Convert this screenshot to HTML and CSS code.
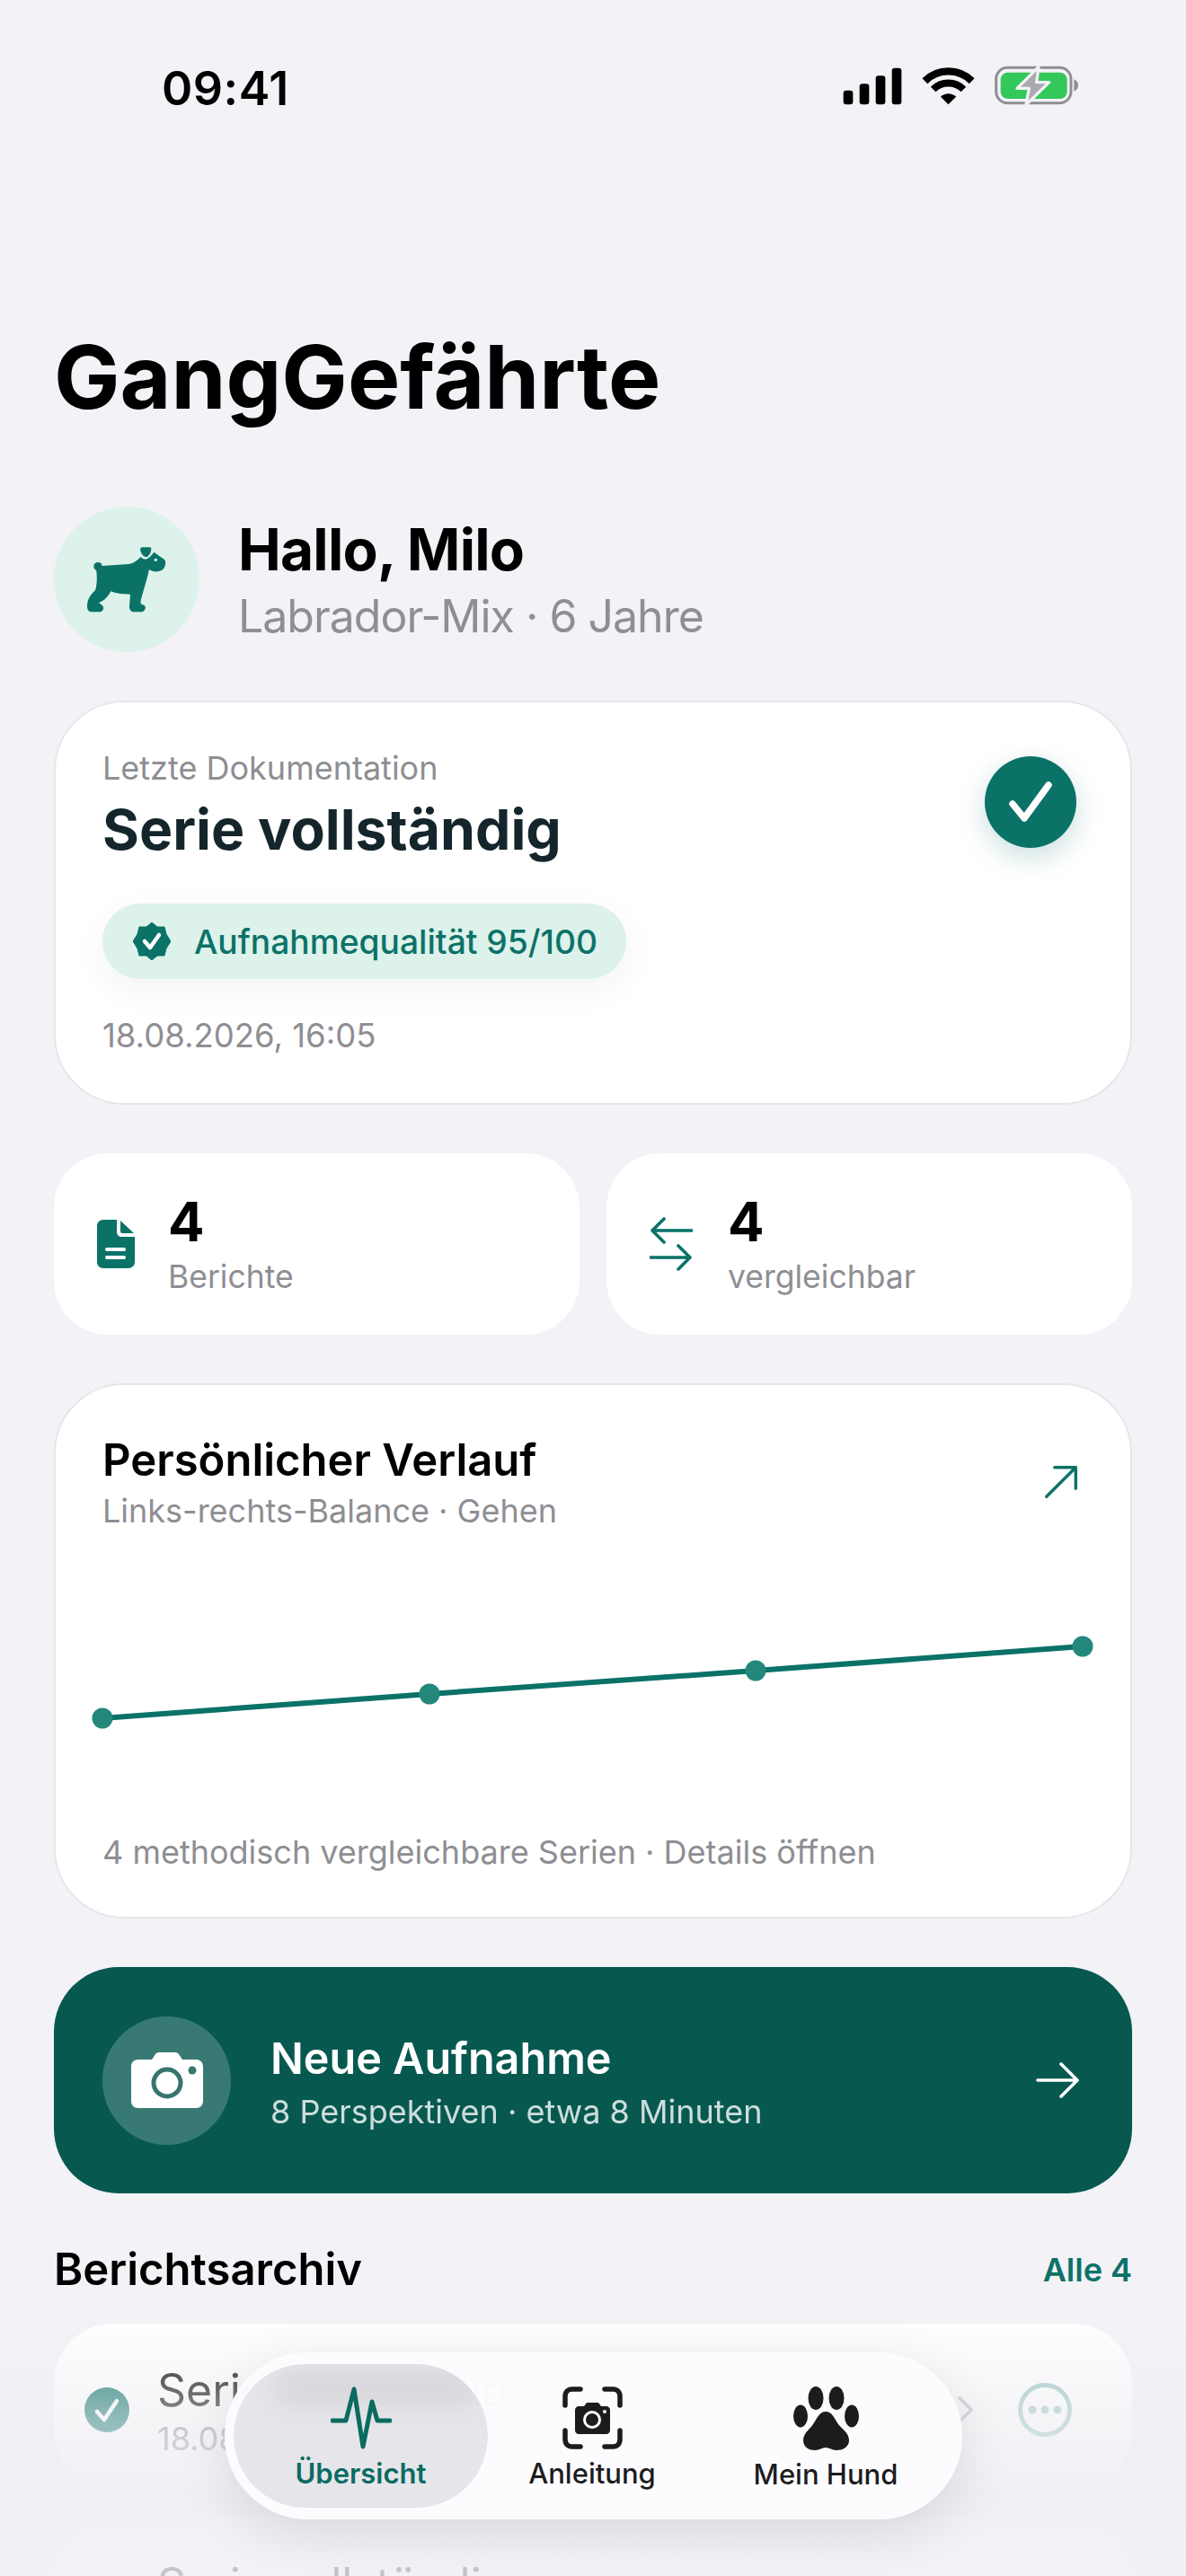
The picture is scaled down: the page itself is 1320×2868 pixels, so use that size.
FILE: index.html
```html
<!DOCTYPE html>
<html lang="de">
<head>
	<meta charset="UTF-8">
	<title>GangGefährte</title>
	<link rel="stylesheet" href="styles.css">
</head>
<body>
	<div class="status-bar">
		<span class="status-time">09:41</span>
		<div class="status-icons">
			<svg class="ic-signal" viewBox="170 76 198 126">
				<rect x="172" y="153" width="32" height="47" rx="9"/>
				<rect x="226" y="131" width="32" height="69" rx="9"/>
				<rect x="280" y="104" width="32" height="96" rx="9"/>
				<rect x="334" y="78" width="32" height="122" rx="9"/>
			</svg>
			<svg class="ic-wifi" viewBox="432 72 176 130">
				<path d="M441 121A112 112 0 0 1 599 121" fill="none" stroke="#000" stroke-width="25"/>
				<path d="M469 149A72 72 0 0 1 571 149" fill="none" stroke="#000" stroke-width="24"/>
				<path d="M520 200L494 174A37 37 0 0 1 546 174Z"/>
			</svg>
			<svg class="ic-battery" viewBox="675 72 282 135">
				<rect x="680" y="79" width="250" height="118" rx="38" fill="none" stroke="#8e8e93" stroke-width="9"/>
				<path d="M940 118C950 122 954 130 954 138C954 146 950 154 940 158Z" fill="#8e8e93"/>
				<rect x="695" y="95" width="222" height="88" rx="24" fill="#34c759"/>
				<path d="M822 76L750 148H790L780 203L857 128H815Z" fill="#a9a9ae" stroke="#f2f2f7" stroke-width="10" stroke-linejoin="round"/>
			</svg>
		</div>
	</div>

	<div class="page">
		<h1 class="app-title">GangGefährte</h1>

		<div class="dog-head">
			<div class="dog-avatar">
				<svg viewBox="60 72 486 486">
					<circle cx="207" cy="272" r="14" fill="#0b7268"/>
					<path d="M200 276L222 270L310 264C330 262 345 245 350 240C358 252 375 252 394 224L430 250C436 262 430 280 420 285C405 292 390 290 378 282C372 310 360 350 350 385V397L362 402C370 410 362 424 352 424H328C316 424 312 416 312 405L315 365C290 365 265 362 250 355C240 375 225 388 210 393L222 402C230 412 222 424 212 424H186C176 424 171 416 171 405C171 385 180 368 198 352C205 330 205 300 200 276Z" fill="#0b7268"/>
					<path d="M345 213C345 207 350 205 356 205H378C385 205 389 208 388 215C387 228 378 243 367 244C355 243 346 228 345 213Z" fill="#0b7268" stroke="#dcf2ea" stroke-width="6"/>
					<circle cx="400" cy="250" r="5" fill="#dcf2ea"/>
				</svg>
			</div>
			<div>
				<div class="dog-name">Hallo, Milo</div>
				<div class="dog-meta">Labrador-Mix · 6 Jahre</div>
			</div>
		</div>

		<section class="card last-doc">
			<div class="doc-label">Letzte Dokumentation</div>
			<div class="doc-title">Serie vollständig</div>
			<div class="quality-pill">
				<svg viewBox="0 0 42 42">
					<path d="M21 0L27 5L35 5L37 13L42 21L37 29L35 37L27 37L21 42L15 37L7 37L5 29L0 21L5 13L7 5L15 5Z" fill="#0b7268" stroke="#0b7268" stroke-width="1" stroke-linejoin="round"/>
					<path d="M13 21L19 28L29 14" fill="none" stroke="#fff" stroke-width="4.5" stroke-linecap="round" stroke-linejoin="round"/>
				</svg>
				<span>Aufnahmequalität 95/100</span>
			</div>
			<div class="doc-date">18.08.2026, 16:05</div>
			<div class="doc-check">
				<svg viewBox="0 0 102 102">
					<path d="M31 53L44 69L71 32" fill="none" stroke="#fff" stroke-width="7.5" stroke-linecap="round" stroke-linejoin="round"/>
				</svg>
			</div>
		</section>

		<div class="stats">
			<div class="stat">
				<svg class="stat-icon" viewBox="0 0 42 54">
					<path d="M7 0H22V13C22 17 24 19 28 19H42V47C42 51 39 54 35 54H7C3 54 0 51 0 47V7C0 3 3 0 7 0Z" fill="#0b7268"/>
					<path d="M26 1L41 15H28C27 15 26 14 26 13Z" fill="#0b7268"/>
					<rect x="9" y="31" width="23" height="4" rx="2" fill="#fff"/>
					<rect x="9" y="40" width="23" height="4" rx="2" fill="#fff"/>
				</svg>
				<div>
					<div class="stat-num">4</div>
					<div class="stat-label">Berichte</div>
				</div>
			</div>
			<div class="stat">
				<svg class="stat-icon swap" viewBox="0 0 48 60">
					<path d="M47 15H3M16 2L3 15L16 28M1 45H45M32 32L45 45L32 58" fill="none" stroke="#0b7268" stroke-width="3.6" stroke-linecap="round" stroke-linejoin="round"/>
				</svg>
				<div>
					<div class="stat-num">4</div>
					<div class="stat-label">vergleichbar</div>
				</div>
			</div>
		</div>

		<section class="card history">
			<div class="history-head">
				<div>
					<h2 class="history-title">Persönlicher Verlauf</h2>
					<div class="history-sub">Links-rechts-Balance · Gehen</div>
				</div>
				<svg class="history-open" viewBox="0 0 42 42">
					<path d="M3 39L39 3M13 3H39V29" fill="none" stroke="#0b7268" stroke-width="3.8" stroke-linecap="round" stroke-linejoin="round"/>
				</svg>
			</div>
			<svg class="history-chart" viewBox="0 0 1196 180">
				<polyline points="52,109 416,82 779,56 1143,29" fill="none" stroke="#0b7268" stroke-width="6" stroke-linecap="round"/>
				<circle class="chart-dot" cx="52" cy="109" r="11.5"/>
				<circle class="chart-dot" cx="416" cy="82" r="11.5"/>
				<circle class="chart-dot" cx="779" cy="56" r="11.5"/>
				<circle class="chart-dot" cx="1143" cy="29" r="11.5"/>
			</svg>
			<div class="history-foot">4 methodisch vergleichbare Serien · Details öffnen</div>
		</section>

		<div class="new-shot">
			<div class="new-shot-icon">
				<svg viewBox="0 0 80 62">
					<path d="M8 8H23L27 2C28 1 29 0 31 0H49C51 0 52 1 53 2L57 8H72C77 8 80 11 80 16V54C80 59 77 62 72 62H8C3 62 0 59 0 54V16C0 11 3 8 8 8Z" fill="#fff"/>
					<circle cx="40" cy="34" r="15" fill="none" stroke="#37756f" stroke-width="5"/>
					<circle cx="68" cy="20" r="4.5" fill="#37756f"/>
				</svg>
			</div>
			<div class="new-shot-text">
				<div class="new-shot-title">Neue Aufnahme</div>
				<div class="new-shot-sub">8 Perspektiven · etwa 8 Minuten</div>
			</div>
			<svg class="new-shot-arrow" viewBox="0 0 48 40">
				<path d="M2 20H45M28 2L46 20L28 38" fill="none" stroke="#fff" stroke-width="3.6" stroke-linecap="round" stroke-linejoin="round"/>
			</svg>
		</div>

		<div class="archive-head">
			<h2>Berichtsarchiv</h2>
			<span>Alle 4</span>
		</div>

		<div class="archive-row">
			<svg class="row-check" viewBox="0 0 50 50">
				<circle cx="25" cy="25" r="25" fill="#0b7268"/>
				<path d="M14 27L22 36L36 15" fill="none" stroke="#fff" stroke-width="4.5" stroke-linecap="round" stroke-linejoin="round"/>
			</svg>
			<div class="row-text">
				<div class="row-title">Serie vollständig</div>
				<div class="row-date">18.08.2026, 16:05</div>
			</div>
			<span class="row-score">95/100</span>
			<svg class="row-chevron" viewBox="0 0 18 30">
				<path d="M2 2L15 15L2 28" fill="none" stroke="#8e8e93" stroke-width="3.5" stroke-linecap="round" stroke-linejoin="round"/>
			</svg>
			<svg class="row-more" viewBox="0 0 60 60">
				<circle cx="30" cy="30" r="27.5" fill="none" stroke="#0b7268" stroke-width="5"/>
				<circle cx="16" cy="30" r="4.5" fill="#0b7268"/>
				<circle cx="30" cy="30" r="4.5" fill="#0b7268"/>
				<circle cx="44" cy="30" r="4.5" fill="#0b7268"/>
			</svg>
		</div>
		<div class="archive-row">
			<div class="row-text second">
				<div class="row-title">Serie vollständig</div>
			</div>
		</div>
	</div>

	<!-- Ausblendung hinter der Tableiste -->
	<div class="bottom-fade"></div>

	<nav class="tab-bar">
		<div class="tab active">
			<span class="tab-ghost" aria-hidden="true"></span>
			<svg class="tab-icon" viewBox="0 0 68 70" width="68" height="70">
				<path d="M2 38H17L26 3L36 67L46 17L52 38H66" fill="none" stroke="#0b6b62" stroke-width="5" stroke-linecap="round" stroke-linejoin="round"/>
			</svg>
			<span class="tab-label">Übersicht</span>
		</div>
		<div class="tab">
			<svg class="tab-icon" viewBox="0 0 67 70" width="67" height="70">
				<path d="M3 21V11C3 6 6 3 11 3H20M47 3H56C61 3 64 6 64 11V21M64 49V59C64 64 61 67 56 67H47M20 67H11C6 67 3 64 3 59V49" fill="none" stroke="#1c1c1e" stroke-width="5.5" stroke-linecap="round"/>
				<path d="M18 22H24L27 18H40L43 22H49C51 22 53 24 53 26V49C53 51 51 53 49 53H18C16 53 14 51 14 49V26C14 24 16 22 18 22Z" fill="#1c1c1e"/>
				<circle cx="33" cy="37" r="8.5" fill="none" stroke="#fff" stroke-width="3"/>
				<circle cx="47" cy="28" r="2" fill="#fff"/>
			</svg>
			<span class="tab-label">Anleitung</span>
		</div>
		<div class="tab">
			<svg class="tab-icon" viewBox="0 0 73 71" width="73" height="71">
				<ellipse cx="8" cy="33" rx="8" ry="12.5" fill="#1c1c1e"/>
				<ellipse cx="25" cy="13" rx="8.5" ry="13" fill="#1c1c1e"/>
				<ellipse cx="48" cy="13" rx="8.5" ry="13" fill="#1c1c1e"/>
				<ellipse cx="65" cy="33" rx="8" ry="12.5" fill="#1c1c1e"/>
				<path d="M36 28C43 28 46 36 50 42C55 48 62 52 62 60C62 68 54 71 48 71C43 71 40 68 36 68C32 68 29 71 24 71C18 71 11 68 11 60C11 52 18 48 22 42C26 36 29 28 36 28Z" fill="#1c1c1e"/>
			</svg>
			<span class="tab-label">Mein Hund</span>
		</div>
	</nav>
</body>
</html>
```

FILE: styles.css
```css
*{
	margin: 0;
	padding: 0;
	box-sizing: border-box;
}
html,body{
	height: 2868px;
	overflow: hidden;
}
body{
	position: relative;
	background: #f2f2f7;
	font-family: Inter, "Noto Sans", "Liberation Sans", sans-serif;
	color: #000;
}
svg{
	display: block;
	flex-shrink: 0;
}

/* status bar */
.status-bar{
	height: 196px;
	padding: 74px 119px 0 180px;
	display: flex;
	justify-content: space-between;
	align-items: flex-start;
}
.status-time{
	font-size: 52px;
	line-height: 50px;
	font-weight: 600;
	letter-spacing: 0.5px;
}
.status-icons{
	display: flex;
	align-items: flex-start;
}
.ic-signal{
	width: 66px;
	height: 42px;
	margin-top: 1px;
}
.ic-wifi{
	width: 59px;
	height: 43px;
	margin-left: 22px;
}
.ic-battery{
	width: 94px;
	height: 45px;
	margin-left: 22px;
	margin-top: -1px;
}

.page{
	padding: 0 60px;
}
.app-title{
	font-size: 98px;
	line-height: 110px;
	font-weight: 700;
	margin-top: 169px;
}

/* dog header */
.dog-head{
	display: flex;
	align-items: center;
	gap: 43px;
	margin-top: 89px;
}
.dog-avatar{
	width: 162px;
	height: 162px;
	border-radius: 50%;
	background: #dcf2ea;
}
.dog-name{
	font-size: 64px;
	line-height: 72px;
	font-weight: 700;
	letter-spacing: -0.8px;
}
.dog-meta{
	font-size: 50px;
	line-height: 58px;
	letter-spacing: -1px;
	margin-top: 9px;
	color: #8e8e93;
}

.card{
	background: #fff;
	border: 2px solid #e6e6ea;
	border-radius: 78px;
}

/* last documentation */
.last-doc{
	position: relative;
	margin-top: 54px;
	height: 450px;
	padding: 52px 52px 0;
}
.doc-label{
	font-size: 36px;
	line-height: 42px;
	color: #8e8e93;
}
.doc-title{
	font-size: 62.5px;
	line-height: 78px;
	font-weight: 700;
	color: #14262c;
	margin-top: 8px;
}
.quality-pill{
	display: inline-flex;
	align-items: center;
	gap: 26px;
	height: 84px;
	margin-top: 44px;
	padding: 0 32px 0 34px;
	border-radius: 42px;
	background: #dcf2ea;
	color: #0b7268;
	font-size: 37.2px;
	font-weight: 500;
	box-shadow: 0 12px 40px rgba(0,0,0,0.05);
}
.quality-pill svg{
	width: 42px;
	height: 42px;
}
.doc-date{
	font-size: 36.5px;
	line-height: 42px;
	color: #8e8e93;
	margin-top: 42px;
}
.doc-check{
	position: absolute;
	top: 60px;
	right: 60px;
	width: 102px;
	height: 102px;
	border-radius: 50%;
	background: #0b7268;
	box-shadow: 0 10px 30px rgba(11,114,104,0.22);
}

/* counters */
.stats{
	display: flex;
	gap: 30px;
	margin-top: 54px;
}
.stat{
	flex: 1;
	height: 202px;
	display: flex;
	align-items: center;
	background: #fff;
	border-radius: 60px;
	padding-left: 48px;
}
.stat-icon{
	width: 42px;
	height: 54px;
	margin-right: 37px;
}
.stat-icon.swap{
	width: 48px;
	height: 60px;
	margin-right: 39px;
}
.stat-num{
	font-size: 60px;
	line-height: 68px;
	font-weight: 700;
}
.stat-label{
	font-size: 35.5px;
	line-height: 44px;
	color: #8e8e93;
	margin-top: 6px;
}

/* history chart */
.history{
	margin-top: 54px;
	height: 596px;
	padding: 54px 0 0;
}
.history-head{
	display: flex;
	justify-content: space-between;
	padding: 0 58px 0 52px;
}
.history-title{
	font-size: 49px;
	line-height: 60px;
	font-weight: 600;
}
.history-sub{
	font-size: 36px;
	line-height: 44px;
	margin-top: 4px;
	color: #8e8e93;
}
.history-open{
	width: 38px;
	height: 38px;
	margin-top: 35px;
}
.history-chart{
	width: 1196px;
	height: 180px;
	margin-top: 100px;
}
.chart-dot{
	fill: #23877c;
}
.history-foot{
	font-size: 36px;
	line-height: 44px;
	color: #8e8e93;
	margin-top: 56px;
	padding-left: 52px;
}

/* new recording button */
.new-shot{
	display: flex;
	align-items: center;
	height: 252px;
	margin-top: 54px;
	padding: 0 59px 0 54px;
	background: #075950;
	border-radius: 72px;
	color: #fff;
}
.new-shot-icon{
	width: 143px;
	height: 143px;
	border-radius: 50%;
	background: rgba(255,255,255,0.2);
	display: flex;
	align-items: center;
	justify-content: center;
}
.new-shot-icon svg{
	width: 80px;
	height: 62px;
}
.new-shot-text{
	flex: 1;
	padding-left: 44px;
}
.new-shot-title{
	font-size: 48.5px;
	line-height: 60px;
	font-weight: 600;
	margin-top: 2px;
}
.new-shot-sub{
	font-size: 36px;
	line-height: 44px;
	margin-top: 7px;
	opacity: 0.8;
}
.new-shot-arrow{
	width: 48px;
	height: 40px;
}

/* archive */
.archive-head{
	display: flex;
	justify-content: space-between;
	align-items: center;
	margin-top: 55px;
}
.archive-head h2{
	font-size: 49px;
	line-height: 60px;
	font-weight: 600;
}
.archive-head span{
	font-size: 36px;
	font-weight: 600;
	color: #0b7268;
}
.archive-row{
	position: relative;
	display: flex;
	align-items: flex-start;
	height: 186px;
	margin-top: 30px;
	padding: 44px 67px 0 34px;
	background: #fff;
	border-radius: 66px;
}
.row-check{
	width: 50px;
	height: 50px;
	margin-top: 27px;
}
.row-text{
	flex: 1;
	padding-left: 31px;
}
.row-text.second{
	padding-left: 81px;
}
.row-title{
	font-size: 50px;
	line-height: 60px;
}
.row-date{
	font-size: 36px;
	line-height: 44px;
	margin-top: 2px;
	color: #8e8e93;
}
.row-score{
	position: absolute;
	left: 820px;
	top: 50px;
	font-size: 50px;
	color: #8e8e93;
}
.row-chevron{
	position: absolute;
	left: 1006px;
	top: 81px;
	width: 18px;
	height: 30px;
	opacity: 0.6;
}
.row-more{
	position: absolute;
	left: 1073px;
	top: 66px;
	width: 60px;
	height: 60px;
	opacity: 0.4;
}

.bottom-fade{
	position: absolute;
	left: 0;
	right: 0;
	bottom: 0;
	height: 300px;
	background: linear-gradient(to bottom, rgba(238,238,243,0) 0%, rgba(238,238,243,0.55) 38%, rgba(238,238,243,0.85) 68%, rgba(240,240,245,0.82) 100%);
}

/* tab bar */
.tab-bar{
	position: absolute;
	left: 250px;
	top: 2619px;
	width: 821px;
	height: 186px;
	padding: 13px 10px;
	border-radius: 93px;
	display: grid;
	grid-template-columns: 283px 232px 288px;
	background: rgba(252,252,255,0.98);
	box-shadow: 0 16px 60px rgba(0,0,0,0.1);
}
.tab{
	position: relative;
	overflow: hidden;
	display: flex;
	flex-direction: column;
	align-items: center;
	padding-top: 25px;
	border-radius: 80px;
}
.tab.active{
	background: #e6e6ea;
}
/* verwischte Reihe hinter dem aktiven Tab */
.tab-ghost{
	position: absolute;
	left: 44px;
	top: 6px;
	width: 230px;
	height: 42px;
	border-radius: 20px;
	background: #c9c9ce;
	filter: blur(12px);
	opacity: 0.45;
}
.tab-icon{
	position: relative;
}
.tab-label{
	position: relative;
	font-size: 31px;
	line-height: 38px;
	font-weight: 500;
	color: #1c1c1e;
	margin-top: 8px;
}
.tab.active .tab-label{
	color: #0b6b62;
	font-weight: 600;
}
```
